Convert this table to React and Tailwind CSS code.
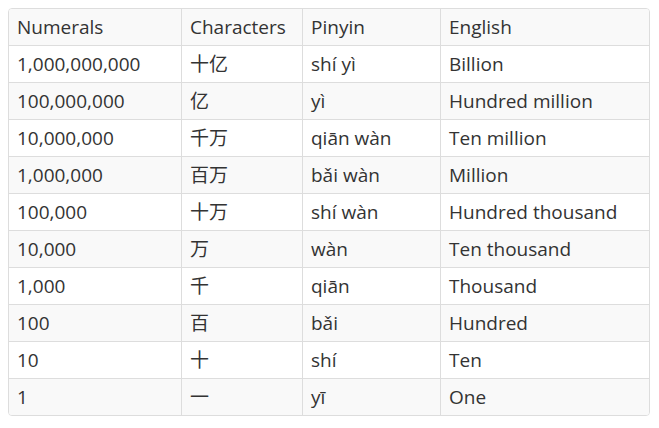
import React from "react";

const rows = [
  ["1,000,000,000", "十亿", "shí yì", "Billion"],
  ["100,000,000", "亿", "yì", "Hundred million"],
  ["10,000,000", "千万", "qiān wàn", "Ten million"],
  ["1,000,000", "百万", "bǎi wàn", "Million"],
  ["100,000", "十万", "shí wàn", "Hundred thousand"],
  ["10,000", "万", "wàn", "Ten thousand"],
  ["1,000", "千", "qiān", "Thousand"],
  ["100", "百", "bǎi", "Hundred"],
  ["10", "十", "shí", "Ten"],
  ["1", "一", "yī", "One"],
];

const Row = ({ cells, index }) => {
  // header is index 0, stripes on even indexes
  const striped = index % 2 === 0;
  return (
    <div
      className={`grid grid-cols-[172px_121px_138px_209px] ${index > 0 ? "h-[37px] border-t border-[#dddddd]" : "h-9"} ${striped ? "bg-[#f9f9f9]" : "bg-white"}`}
    >
      {cells.map((c, i) => (
        <div
          key={i}
          className={`flex items-center px-2 whitespace-nowrap ${i > 0 ? "border-l border-[#dddddd]" : ""}`}
        >
          {c}
        </div>
      ))}
    </div>
  );
};

export default function App() {
  return (
    <div className="bg-white w-[659px] h-[428px] p-2">
      <div
        className="w-[642px] border border-[#dddddd] rounded-[4px] overflow-hidden text-[19px] text-[#333333]"
        style={{ fontFamily: '"Open Sans", "Noto Sans CJK SC", sans-serif' }}
      >
        <Row cells={["Numerals", "Characters", "Pinyin", "English"]} index={0} />
        {rows.map((r, i) => (
          <Row key={i} cells={r} index={i + 1} />
        ))}
      </div>
    </div>
  );
}
